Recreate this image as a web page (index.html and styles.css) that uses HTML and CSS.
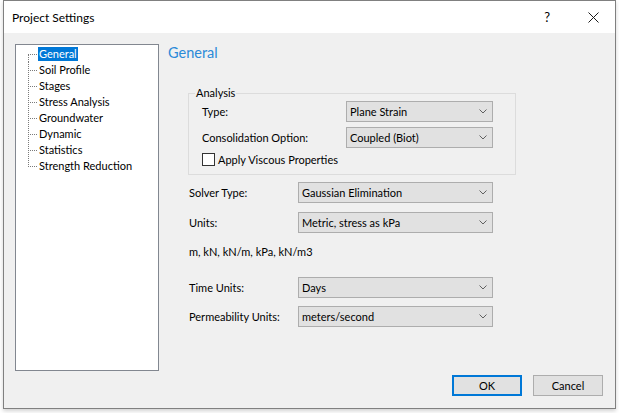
FILE: index.html
```
<!DOCTYPE html>
<html>
<head>
<meta charset="utf-8">
<link rel="stylesheet" href="styles.css">
</head>
<body>
<div class="window">
  <div class="titlebar">
    <span class="title">Project Settings</span>
    <span class="help">?</span>
    <span class="close"><svg width="11" height="11" viewBox="0 0 11 11"><path d="M0.5 0.5 L10.5 10.5 M10.5 0.5 L0.5 10.5" stroke="#1a1a1a" stroke-width="1" fill="none"/></svg></span>
  </div>
  <div class="content">
    <div class="main">
      <ul class="tree">
        <li class="node first"><span class="conn"></span><span class="text selected">General</span></li>
        <li class="node"><span class="conn"></span><span class="text">Soil Profile</span></li>
        <li class="node"><span class="conn"></span><span class="text">Stages</span></li>
        <li class="node"><span class="conn"></span><span class="text">Stress Analysis</span></li>
        <li class="node"><span class="conn"></span><span class="text">Groundwater</span></li>
        <li class="node"><span class="conn"></span><span class="text">Dynamic</span></li>
        <li class="node"><span class="conn"></span><span class="text">Statistics</span></li>
        <li class="node last"><span class="conn"></span><span class="text">Strength Reduction</span></li>
      </ul>
      <div class="panel">
        <h1 class="heading">General</h1>
        <fieldset class="group">
          <legend class="legend">Analysis</legend>
          <div class="grow">
            <span class="label">Type:</span>
            <div class="combo narrow"><span>Plane Strain</span><svg class="chev" width="8" height="5" viewBox="0 0 8 5"><polyline points="0.5,0.5 4,4 7.5,0.5" stroke="#606060" stroke-width="1" fill="none"/></svg></div>
          </div>
          <div class="grow">
            <span class="label">Consolidation Option:</span>
            <div class="combo narrow"><span>Coupled (Biot)</span><svg class="chev" width="8" height="5" viewBox="0 0 8 5"><polyline points="0.5,0.5 4,4 7.5,0.5" stroke="#606060" stroke-width="1" fill="none"/></svg></div>
          </div>
          <div class="check"><span class="box"></span><span>Apply Viscous Properties</span></div>
        </fieldset>
        <div class="rows">
          <div class="frow">
            <span class="label">Solver Type:</span>
            <div class="combo wide"><span>Gaussian Elimination</span><svg class="chev" width="8" height="5" viewBox="0 0 8 5"><polyline points="0.5,0.5 4,4 7.5,0.5" stroke="#606060" stroke-width="1" fill="none"/></svg></div>
          </div>
          <div class="frow gap-units">
            <span class="label">Units:</span>
            <div class="combo wide"><span>Metric, stress as kPa</span><svg class="chev" width="8" height="5" viewBox="0 0 8 5"><polyline points="0.5,0.5 4,4 7.5,0.5" stroke="#606060" stroke-width="1" fill="none"/></svg></div>
          </div>
          <div class="units-text">m, kN, kN/m, kPa, kN/m3</div>
          <div class="frow gap-time">
            <span class="label">Time Units:</span>
            <div class="combo wide"><span>Days</span><svg class="chev" width="8" height="5" viewBox="0 0 8 5"><polyline points="0.5,0.5 4,4 7.5,0.5" stroke="#606060" stroke-width="1" fill="none"/></svg></div>
          </div>
          <div class="frow gap-perm">
            <span class="label">Permeability Units:</span>
            <div class="combo wide"><span>meters/second</span><svg class="chev" width="8" height="5" viewBox="0 0 8 5"><polyline points="0.5,0.5 4,4 7.5,0.5" stroke="#606060" stroke-width="1" fill="none"/></svg></div>
          </div>
        </div>
      </div>
    </div>
    <div class="footer">
      <button class="btn default">OK</button>
      <button class="btn">Cancel</button>
    </div>
  </div>
</div>
</body>
</html>
```
FILE: styles.css
```
* { box-sizing: border-box; }
html, body { margin: 0; padding: 0; background: #ffffff; }
body {
  font-family: Lato, "Noto Sans", "Liberation Sans", sans-serif;
  font-size: 11px;
  color: #000;
  width: 619px;
  height: 413px;
  overflow: hidden;
}
.window {
  margin-left: 3px;
  width: 613px;
  height: 409px;
  border: 1px solid #808080;
  background: #f0f0f0;
  display: flex;
  flex-direction: column;
  box-shadow: 0 2px 4px rgba(0,0,0,0.18);
}
.titlebar {
  height: 32px;
  background: #ffffff;
  display: flex;
  align-items: center;
  flex: none;
}
.title {
  margin-left: 8px;
  font-size: 12px;
  flex: 1;
}
.help {
  font-size: 13px;
  margin-right: 38px;
}
.close {
  display: flex;
  margin-right: 16px;
}
.content {
  flex: 1;
  display: flex;
  flex-direction: column;
}
.main {
  display: flex;
  padding: 11px 0 0 11px;
}
.tree {
  list-style: none;
  margin: 0;
  padding: 1px 0 0 12px;
  width: 144px;
  height: 327px;
  background: #fff;
  border: 1px solid #828790;
  flex: none;
}
.node {
  display: flex;
  align-items: center;
  height: 16px;
}
.conn {
  width: 10px;
  height: 16px;
  flex: none;
  background-image:
    repeating-linear-gradient(to right, #7a7a7a 0 1px, transparent 1px 2px),
    repeating-linear-gradient(to bottom, #7a7a7a 0 1px, transparent 1px 2px);
  background-size: 10px 1px, 1px 16px;
  background-position: 0 8px, 0 0;
  background-repeat: no-repeat;
}
.node.first .conn {
  background-size: 10px 1px, 1px 8px;
  background-position: 0 8px, 0 9px;
}
.node.last .conn {
  background-size: 10px 1px, 1px 9px;
  background-position: 0 8px, 0 0;
}
.text {
  display: inline-block;
  line-height: 14px;
  padding: 0 1px;
  white-space: nowrap;
}
.selected {
  background: #0078d7;
  color: #fff;
}
.panel {
  margin-left: 9px;
  flex: 1;
}
.heading {
  margin: -1px 0 0 0;
  font-size: 14.5px;
  font-weight: normal;
  line-height: 20px;
  color: #2b8ad8;
}
.group {
  margin: 23px 0 0 20px;
  width: 328px;
  border: 1px solid #dcdcdc;
  padding: 1px 0 8px 13px;
}
.legend {
  padding: 0 1px;
  margin-left: -7px;
  line-height: 14px;
}
.grow {
  display: grid;
  grid-template-columns: 144px 147px;
  align-items: center;
  margin-bottom: 5px;
}
.label { white-space: nowrap; }
.combo {
  height: 21px;
  background: #e1e1e1;
  border: 1px solid #adadad;
  display: flex;
  align-items: center;
  justify-content: space-between;
  padding: 0 5px 0 3px;
}
.combo.narrow { width: 147px; }
.combo.wide { width: 195px; }
.chev { flex: none; }
.check {
  display: flex;
  align-items: center;
  height: 13px;
}
.box {
  width: 13px;
  height: 13px;
  background: #fff;
  border: 1px solid #333;
  margin-right: 3px;
  flex: none;
}
.rows {
  margin: 7px 0 0 21px;
  display: flex;
  flex-direction: column;
}
.frow {
  display: grid;
  grid-template-columns: 109px 195px;
  align-items: center;
}
.gap-units { margin-top: 9px; }
.units-text { margin-top: 11px; line-height: 16px; }
.gap-time { margin-top: 17px; }
.gap-perm { margin-top: 8px; }
.footer {
  display: flex;
  justify-content: flex-end;
  gap: 11px;
  padding: 4px 12px 0 0;
}
.btn {
  width: 70px;
  height: 21px;
  background: #e1e1e1;
  border: 1px solid #adadad;
  font-family: inherit;
  font-size: 11px;
  color: #000;
  padding: 0;
}
.btn.default {
  border: 2px solid #0078d7;
}
```
